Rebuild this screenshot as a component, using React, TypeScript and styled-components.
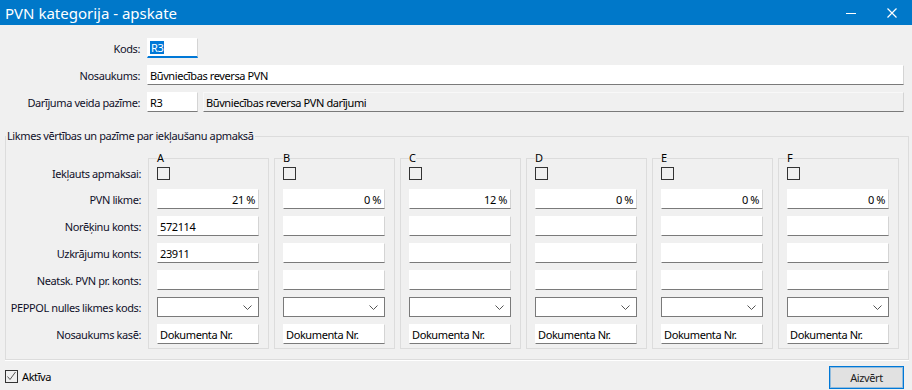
import React from 'react'
import styled, { createGlobalStyle } from 'styled-components'

const GlobalStyle = createGlobalStyle`
  html, body {
    margin: 0;
    padding: 0;
    background: #f0f0f0;
  }
  body {
    font-family: "Noto Sans", "Liberation Sans", sans-serif;
    font-size: 11px;
    letter-spacing: -0.4px;
    color: #000;
  }
  * {
    box-sizing: border-box;
  }
`

const Window = styled.div`
  width: 912px;
  height: 390px;
  display: flex;
  flex-direction: column;
  background: #f0f0f0;
  overflow: hidden;
`

const TitleBar = styled.div`
  height: 25px;
  flex: none;
  display: flex;
  align-items: center;
  background: #0078c9;
  color: #fff;
`

const TitleText = styled.div`
  flex: 1;
  padding-left: 5px;
  font-size: 15px;
  letter-spacing: 0;
`

const WinButton = styled.div`
  width: 41px;
  height: 25px;
  display: flex;
  align-items: center;
  justify-content: center;
`

const TopForm = styled.div`
  display: grid;
  grid-template-columns: 135px 1fr;
  grid-auto-rows: 20px;
  column-gap: 7px;
  row-gap: 7px;
  padding: 13px 8px 0 5px;
`

const Label = styled.div`
  display: flex;
  align-items: center;
  justify-content: flex-end;
  white-space: nowrap;
  color: #10102a;
`

const Field = styled.div<{ $width?: number; $align?: 'left' | 'right'; $muted?: boolean; $focused?: boolean }>`
  height: 20px;
  width: ${p => (p.$width ? `${p.$width}px` : 'auto')};
  flex: ${p => (p.$width ? 'none' : '1')};
  display: flex;
  align-items: center;
  justify-content: ${p => (p.$align === 'right' ? 'flex-end' : 'flex-start')};
  padding: 0 3px 0 2px;
  background: ${p => (p.$muted ? '#f0f0f0' : '#fff')};
  border-top: 1px solid ${p => (p.$muted ? '#f8f8f8' : '#fff')};
  border-left: 1px solid ${p => (p.$muted ? '#f8f8f8' : '#fff')};
  border-right: 1px solid #d4d4d4;
  border-bottom: ${p => (p.$focused ? '2px solid #0078d7' : '1px solid #7a7a7a')};
  white-space: nowrap;
  overflow: hidden;
`

const Selected = styled.span`
  background: #0078d7;
  color: #fff;
  padding: 0 1px;
  line-height: 13px;
`

const FieldPair = styled.div`
  display: flex;
  gap: 5px;
`

const Group = styled.fieldset`
  margin: 18px 3px 0 5px;
  padding: 10px 8px 10px 0;
  border: 1px solid #dcdcdc;
  box-shadow: 0 1px 0 #fff;
  min-width: 0;
`

const GroupTitle = styled.legend`
  padding: 0 1px;
  height: 12px;
  line-height: 12px;
  color: #10102a;
`

const GroupBody = styled.div`
  display: flex;
  gap: 7px;
`

const RowGrid = styled.div`
  display: grid;
  grid-template-rows: 18px repeat(6, 20px);
  row-gap: 7px;
`

const LabelColumn = styled(RowGrid)`
  width: 135px;
  flex: none;
  padding-top: 12px;
`

const Columns = styled.div`
  display: flex;
  gap: 5px;
`

const Column = styled.fieldset`
  width: 121px;
  flex: none;
  margin: 0;
  padding: 0 9px 4px 8px;
  border: 1px solid #dcdcdc;
  min-width: 0;
`

const ColumnLetter = styled.legend`
  padding: 0;
  height: 12px;
  line-height: 12px;
`

const CheckCell = styled.div`
  display: flex;
  align-items: center;
`

const Box = styled.div`
  width: 13px;
  height: 13px;
  border: 1px solid #333;
  display: flex;
  align-items: center;
  justify-content: center;
`

const Select = styled.div`
  height: 20px;
  border: 1px solid #7a7a7a;
  background: #fff;
  display: flex;
  align-items: center;
  justify-content: flex-end;
  padding-right: 6px;
`

const Footer = styled.div`
  display: flex;
  justify-content: space-between;
  align-items: flex-start;
  padding: 6px 8px 0 5px;
`

const CheckLabel = styled.div`
  display: flex;
  align-items: center;
  gap: 4px;
  margin-top: 3px;
`

const Button = styled.div`
  width: 75px;
  height: 23px;
  display: flex;
  align-items: center;
  justify-content: center;
  background: #e1e1e1;
  border: 1px solid #0078d7;
  box-shadow: inset 0 0 0 1px rgba(0, 120, 215, 0.35);
  color: #222;
`

const rowLabels = [
  'Iekļauts apmaksai:',
  'PVN likme:',
  'Norēķinu konts:',
  'Uzkrājumu konts:',
  'Neatsk. PVN pr. konts:',
  'PEPPOL nulles likmes kods:',
  'Nosaukums kasē:',
]

const columns = [
  { letter: 'A', rate: '21 %', settle: '572114', accrual: '23911' },
  { letter: 'B', rate: '0 %', settle: '', accrual: '' },
  { letter: 'C', rate: '12 %', settle: '', accrual: '' },
  { letter: 'D', rate: '0 %', settle: '', accrual: '' },
  { letter: 'E', rate: '0 %', settle: '', accrual: '' },
  { letter: 'F', rate: '0 %', settle: '', accrual: '' },
]

const Chevron = () => (
  <svg width="9" height="5" viewBox="0 0 9 5">
    <polyline points="0.5,0.5 4.5,4.5 8.5,0.5" fill="none" stroke="#555" strokeWidth="1" />
  </svg>
)

export default function App() {
  return (
    <Window>
      <GlobalStyle />
      <TitleBar>
        <TitleText>PVN kategorija - apskate</TitleText>
        <WinButton>
          <svg width="10" height="10" viewBox="0 0 10 10">
            <line x1="0" y1="5.5" x2="10" y2="5.5" stroke="#fff" strokeWidth="1" />
          </svg>
        </WinButton>
        <WinButton>
          <svg width="10" height="10" viewBox="0 0 10 10">
            <path d="M0.5 0.5 L9.5 9.5 M9.5 0.5 L0.5 9.5" stroke="#fff" strokeWidth="1.2" />
          </svg>
        </WinButton>
      </TitleBar>

      <TopForm>
        <Label>Kods:</Label>
        <FieldPair>
          <Field $width={51} $focused>
            <Selected>R3</Selected>
          </Field>
        </FieldPair>
        <Label>Nosaukums:</Label>
        <Field>Būvniecības reversa PVN</Field>
        <Label>Darījuma veida pazīme:</Label>
        <FieldPair>
          <Field $width={51}>R3</Field>
          <Field $muted>Būvniecības reversa PVN darījumi</Field>
        </FieldPair>
      </TopForm>

      <Group>
        <GroupTitle>Likmes vērtības un pazīme par iekļaušanu apmaksā</GroupTitle>
        <GroupBody>
          <LabelColumn>
            {rowLabels.map(l => (
              <Label key={l}>{l}</Label>
            ))}
          </LabelColumn>
          <Columns>
            {columns.map(c => (
              <Column key={c.letter}>
                <ColumnLetter>{c.letter}</ColumnLetter>
                <RowGrid>
                  <CheckCell>
                    <Box />
                  </CheckCell>
                  <Field $align="right">{c.rate}</Field>
                  <Field>{c.settle}</Field>
                  <Field>{c.accrual}</Field>
                  <Field />
                  <Select>
                    <Chevron />
                  </Select>
                  <Field>Dokumenta Nr.</Field>
                </RowGrid>
              </Column>
            ))}
          </Columns>
        </GroupBody>
      </Group>

      <Footer>
        <CheckLabel>
          <Box>
            <svg width="11" height="11" viewBox="0 0 11 11">
              <polyline points="1.5,5.5 4,8.5 9.5,1" fill="none" stroke="#555" strokeWidth="1" />
            </svg>
          </Box>
          <span>Aktīva</span>
        </CheckLabel>
        <Button>Aizvērt</Button>
      </Footer>
    </Window>
  )
}
